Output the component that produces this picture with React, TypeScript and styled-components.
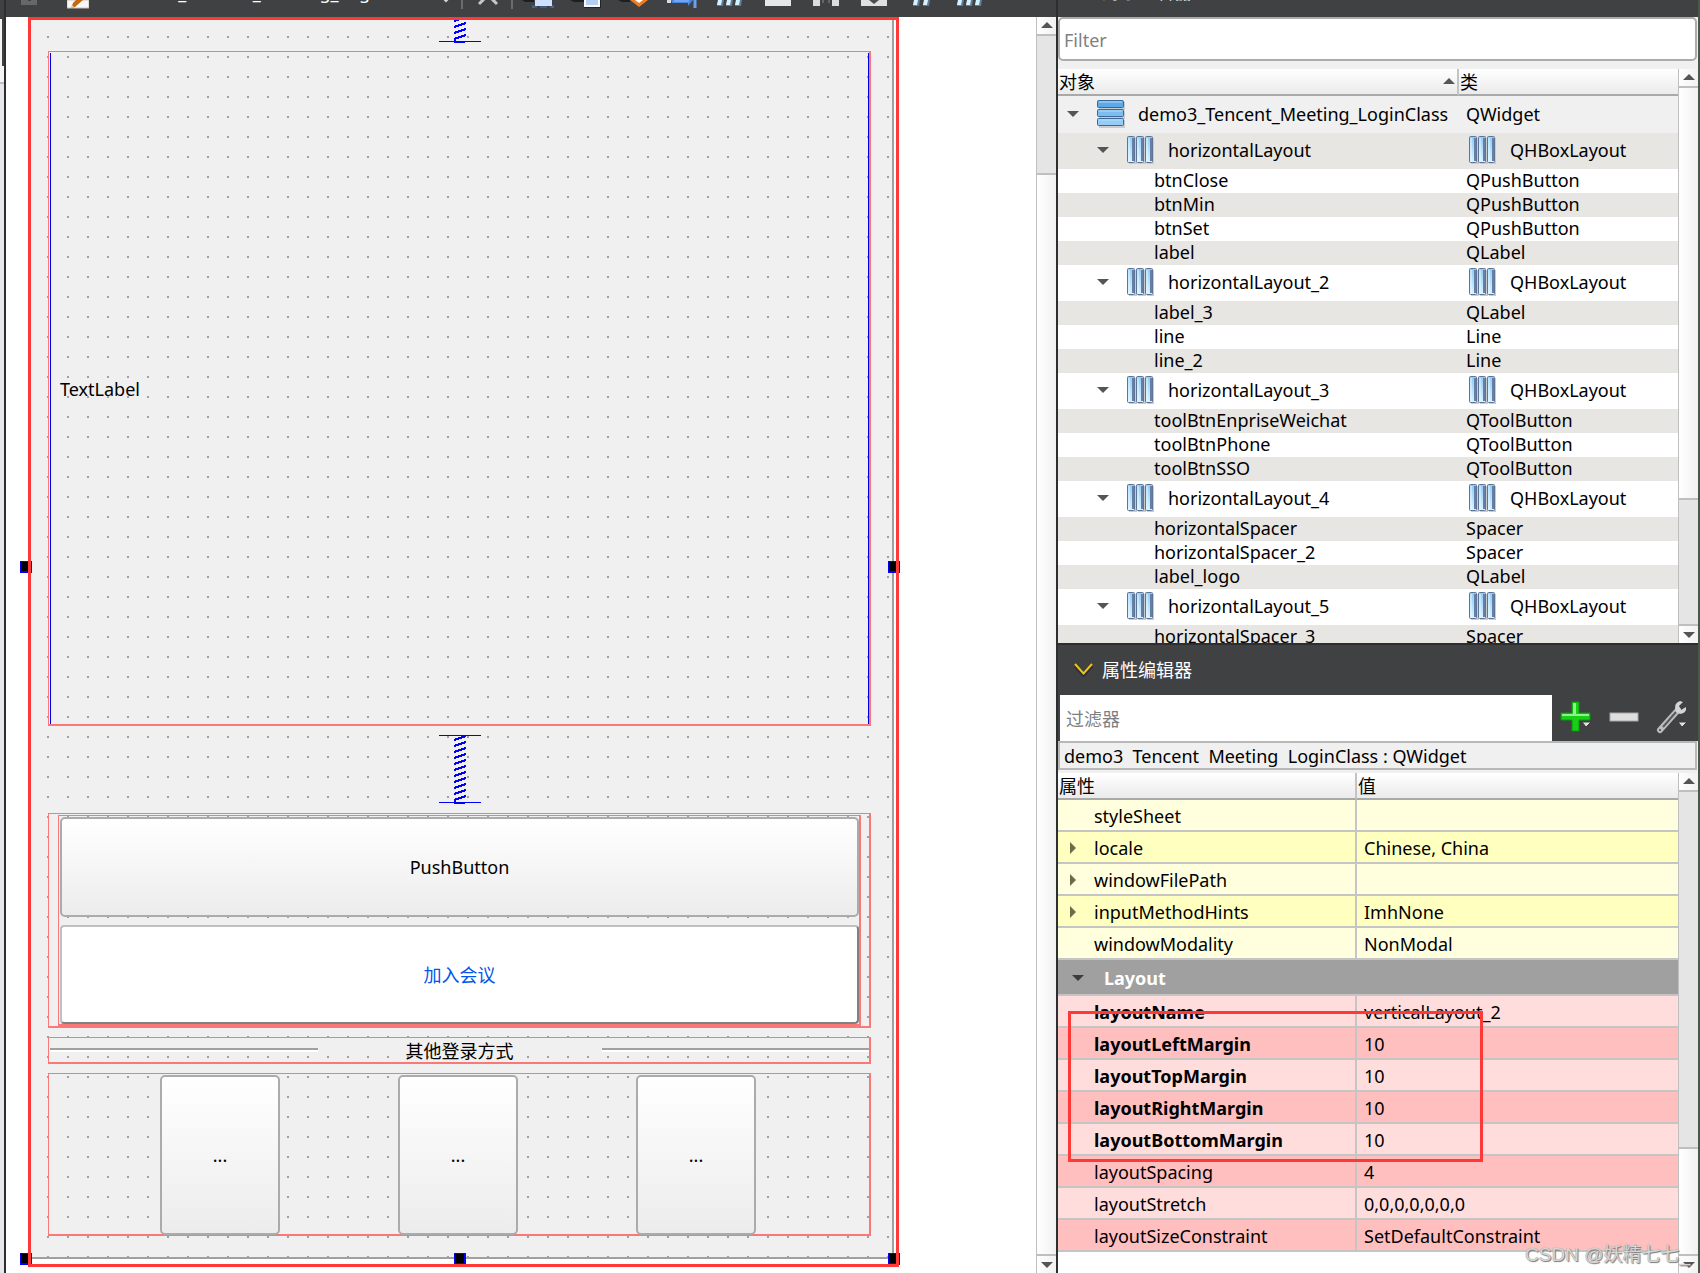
import React from "react";
import styled, { createGlobalStyle, css } from "styled-components";

const RED = "#ff3838";
const OUTLINE = "#fa7878";
const DARK = "#404142";
const EDGE = "#2c2e30";

const GlobalStyle = createGlobalStyle`
  *, *::before, *::after { box-sizing: border-box; }
  body {
    margin: 0;
    background: #fff;
    color: #000;
    font: 18px/24px "Noto Sans", "Noto Sans CJK SC", sans-serif;
  }
  button, input, select { font: inherit; color: inherit; }
`;

/* ---------- shell ---------- */

const Shell = styled.div`
  display: grid;
  grid-template-columns: 6px minmax(0, 1fr) 644px;
  height: 100vh;
  overflow: hidden;
`;

const LeftEdge = styled.div`
  display: flex;
  flex-direction: column;
  background: #e5e7ea;
  border-right: 2px solid ${EDGE};
`;

const LeftEdgeTop = styled.div`
  height: 66px;
  border-top: 19px solid ${DARK};
  border-right: 2px solid ${DARK};
  background: #f4f4f4;
`;

const LeftEdgeMark = styled.div`
  height: 18px;
  border-bottom: 2px solid #bfbfbf;
  background: #f4f4f4;
`;

const Workspace = styled.main`
  display: flex;
  flex-direction: column;
  min-width: 0;
  min-height: 0;
`;

const Sidebar = styled.aside`
  display: flex;
  flex-direction: column;
  min-height: 0;
  background: #f0f0f0;
  border-left: 2px solid ${EDGE};
  border-right: 2px solid #4c574c;
`;

/* ---------- top tool bar ---------- */

const Toolbar = styled.div`
  display: flex;
  flex: none;
  height: 17px;
  overflow: hidden;
  background: ${DARK};
`;

const ToolButton = styled.button<{ $w: number }>`
  display: flex;
  justify-content: center;
  width: ${(p) => p.$w}px;
  height: 17px;
  flex: none;
  padding: 0;
  border: 0;
  background: none;
`;

const FileSelect = styled.select`
  align-self: flex-end;
  width: 326px;
  height: 24px;
  margin-bottom: 13px;
  padding: 0 0 0 14px;
  border: 0;
  appearance: none;
  background: none;
  color: #fff;
`;

const Separator = styled.span`
  width: 2px;
  height: 9px;
  margin-right: 1px;
  flex: none;
  background: #6b6c6d;
`;

/* ---------- form canvas ---------- */

const CanvasRow = styled.div`
  display: flex;
  flex: 1;
  min-height: 0;
`;

const Canvas = styled.div`
  display: flex;
  flex: 1;
  min-width: 0;
  padding: 0 137px 6px 22px;
  background: #fff;
`;

const Frame = styled.section`
  position: relative;
  display: flex;
  flex: 1;
  min-width: 0;
  padding: 3px 5px 8px 3px;
  &::after {
    content: "";
    position: absolute;
    inset: 0;
    border: 3px solid ${RED};
    pointer-events: none;
  }
`;

const Form = styled.div`
  display: flex;
  flex: 1;
  flex-direction: column;
  min-width: 0;
  padding: 0 21px 21px 17px;
  border: solid #a0a0a0;
  border-width: 0 2px 2px 0;
  background: conic-gradient(at 2px 2px, transparent 75%, #a0a0a0 0) 16px 16px / 20px 20px #f0f0f0;
`;

type HandlePlace = "left" | "right" | "bottomLeft" | "bottom" | "bottomRight";

const handlePlaces = {
  left: css`left: -8px; top: calc(50% - 81px);`,
  right: css`right: -1px; top: calc(50% - 81px);`,
  bottomLeft: css`left: -8px; bottom: 2px;`,
  bottom: css`left: calc(50% - 10px); bottom: 2px;`,
  bottomRight: css`right: -1px; bottom: 2px;`,
};

const Handle = styled.span<{ $place: HandlePlace }>`
  position: absolute;
  width: 12px;
  height: 12px;
  background: #000;
  border: 1px solid #00f;
  border-bottom-width: 2px;
  border-right-width: 2px;
  ${(p) => handlePlaces[p.$place]}
`;

const SpacerItem = styled.div<{ $h: number; $end?: boolean }>`
  display: flex;
  flex: none;
  height: ${(p) => p.$h}px;
  justify-content: center;
  align-items: ${(p) => (p.$end ? "flex-start" : "center")};
`;

const Outline = styled.div`
  border: solid ${OUTLINE};
  border-width: 1px 2px 2px 1px;
`;

const LabelBox = styled(Outline)`
  display: flex;
  flex: 1;
  padding: 1px 0 0 1px;
`;

const LabelInner = styled.div`
  display: flex;
  flex: 1;
  align-items: center;
  padding-left: 9px;
  border: solid #0000e6;
  border-width: 0 1px;
`;

const ButtonGroup = styled(Outline)`
  padding: 1px 8px 0 9px;
`;

const ButtonStack = styled(Outline)`
  display: flex;
  flex-direction: column;
  gap: 8px;
  padding: 1px 0 0 1px;
`;

const raised = css`
  border: 2px solid #ababab;
  border-radius: 5px;
  background: linear-gradient(#fff, #ececec);
`;

const PushButton = styled.button`
  ${raised}
  height: 100px;
`;

const JoinButton = styled.button`
  height: 99px;
  border: 2px solid;
  border-color: #c0c0c0 #808080 #808080 #c0c0c0;
  border-radius: 4px;
  background: #fff;
  color: #0055ea;
`;

const DividerRow = styled(Outline)`
  display: flex;
  align-items: center;
  height: 27px;
  margin: 9px 0;
  padding-left: 1px;
`;

const Rule = styled.span`
  flex: 1;
  height: 4px;
  border-top: 2px solid #a0a0a0;
  border-bottom: 2px solid #fff;
`;

const DividerText = styled.span`
  width: 284px;
  padding-top: 2px;
  text-align: center;
`;

const ToolRow = styled(Outline)`
  display: flex;
  justify-content: space-between;
  padding: 1px 113px 0 111px;
`;

const LoginTool = styled.button`
  ${raised}
  width: 120px;
  height: 160px;
  margin-bottom: -1px;
`;

/* ---------- scroll bars ---------- */

const Bar = styled.div`
  display: flex;
  flex: none;
  flex-direction: column;
  width: 20px;
  border-left: 1px solid #bfbfbf;
  background: linear-gradient(90deg, #fff, #f1f1f1);
`;

const BarEnd = styled.button`
  display: flex;
  flex: none;
  align-items: center;
  justify-content: center;
  height: 17px;
  padding: 0;
  border: 0;
  background: none;
`;

const BarPart = styled.div<{ $size: number; $thumb?: boolean }>`
  flex: ${(p) => p.$size} 0 0;
  border-top: 2px solid #bfbfbf;
  background: ${(p) => (p.$thumb ? "#e5e5e5" : "none")};
`;

const BarLine = styled.div`
  flex: none;
  height: 2px;
  background: #bfbfbf;
`;

/* ---------- side bar ---------- */

const TopTitle = styled.h2`
  display: flex;
  flex: none;
  align-items: flex-end;
  gap: 9px;
  height: 17px;
  margin: 0;
  padding: 0 0 13px 16px;
  overflow: hidden;
  background: ${DARK};
  color: #fff;
  font-size: 18px;
  font-weight: 400;
  svg { margin-bottom: 4px; }
`;

const PanelTitle = styled.h2`
  display: flex;
  flex: none;
  align-items: center;
  gap: 9px;
  height: 52px;
  margin: 0;
  padding-left: 16px;
  border-top: 2px solid ${EDGE};
  background: ${DARK};
  color: #fff;
  font-size: 18px;
  font-weight: 400;
`;

const ObjectFilter = styled.input`
  flex: none;
  height: 44px;
  margin: 0 1px 8px 0;
  padding: 2px 4px 0;
  border: 2px solid #ababab;
  border-radius: 5px;
  background: #fff;
  &::placeholder { color: #808080; opacity: 1; }
`;

const FilterRow = styled.div`
  display: flex;
  flex: none;
  height: 46px;
  padding: 0 2px;
  background: ${DARK};
`;

const PropertyFilter = styled.input`
  flex: 1;
  min-width: 0;
  padding: 2px 6px 0;
  border: 0;
  background: #fff;
  &::placeholder { color: #808080; opacity: 1; }
`;

const FilterButton = styled.button`
  display: flex;
  align-items: center;
  justify-content: center;
  width: 48px;
  padding: 0 0 2px;
  border: 0;
  background: none;
`;

const SelectedObject = styled.div`
  flex: none;
  height: 29px;
  margin: 0 1px 3px 0;
  padding: 1px 4px 0;
  border: 2px solid #b8b8b8;
  background: #f0f0f0;
  white-space: pre;
`;

const Pane = styled.div<{ $grow: number; $bg: string }>`
  position: relative;
  display: flex;
  flex: ${(p) => p.$grow} 0 0;
  min-height: 0;
  overflow: hidden;
  background: ${(p) => p.$bg};
`;

const TableArea = styled.div`
  flex: 1;
  min-width: 0;
  overflow: hidden;
`;

const Table = styled.table`
  width: 100%;
  table-layout: fixed;
  border-spacing: 0;
  white-space: nowrap;
`;

const Head = styled.th<{ $w?: number }>`
  height: 27px;
  width: ${(p) => (p.$w ? `${p.$w}px` : "auto")};
  padding: 1px 2px 0 1px;
  border-bottom: 2px solid #a9a9a9;
  border-right: ${(p) => (p.$w ? "2px solid #c4c4c4" : "0")};
  background: linear-gradient(#fff, #ebebeb);
  font-weight: 400;
  text-align: left;
`;

const HeadInner = styled.span`
  display: flex;
  align-items: center;
  justify-content: space-between;
`;

const Cell = styled.td<{ $h: number; $bg: string; $pad: number }>`
  height: ${(p) => p.$h}px;
  padding: 0 0 2px ${(p) => p.$pad}px;
  background: ${(p) => p.$bg};
  line-height: 22px;
`;

const CellInner = styled.span<{ $gap: number }>`
  display: flex;
  align-items: center;
  gap: ${(p) => p.$gap}px;
`;

const PropName = styled.td<{ $bg: string; $bold?: boolean }>`
  height: 32px;
  padding: 2px 0 0 10px;
  border: solid #c5c5c5;
  border-width: 0 2px 2px 0;
  background: ${(p) => p.$bg};
  font-weight: ${(p) => (p.$bold ? 700 : 400)};
`;

const PropValue = styled.td<{ $bg: string }>`
  padding: 2px 0 0 7px;
  border-bottom: 2px solid #c5c5c5;
  background: ${(p) => p.$bg};
`;

const Indent = styled.span`
  display: flex;
  width: 26px;
  height: 12px;
  flex: none;
`;

const GroupCell = styled.td`
  height: 36px;
  padding: 2px 0 0 14px;
  border-bottom: 2px solid #c5c5c5;
  background: #a0a0a0;
  color: #fff;
  font-weight: 700;
`;

const Highlight = styled.div`
  position: absolute;
  left: 10px;
  top: 238px;
  width: 415px;
  height: 151px;
  border: 3px solid ${RED};
  pointer-events: none;
`;

const Watermark = styled.span`
  position: absolute;
  right: 8px;
  bottom: 6px;
  color: #d8d4d4;
  font: 19px/24px "Liberation Sans", "Noto Sans CJK SC", sans-serif;
  text-shadow: 1px 1px 1px #777, 0 0 1px #888;
`;

/* ---------- drawings ---------- */

const Triangle = ({ dir, color = "#555" }: { dir: "up" | "down" | "right"; color?: string }) => {
  const d = { up: "M0 8L6 2L12 8Z", down: "M0 3H12L6 9Z", right: "M2 0L8 6L2 12Z" }[dir];
  return (
    <svg width="12" height="12" viewBox="0 0 12 12" aria-hidden="true">
      <path d={d} fill={color} />
    </svg>
  );
};

const HBoxIcon = () => (
  <svg width="27" height="28" viewBox="0 0 27 28" aria-hidden="true">
    <defs>
      <linearGradient id="slat" x1="0" y1="0" x2="0" y2="1">
        <stop offset="0" stopColor="#8ccdf8" />
        <stop offset="1" stopColor="#dcf3ff" />
      </linearGradient>
    </defs>
    {[0, 9, 18].map((x) => (
      <g key={x}>
        <rect x={x + 2} y="2" width="8" height="26" fill="#c9cbce" />
        <rect x={x + 0.5} y="0.5" width="7" height="26" rx="1" fill="url(#slat)" stroke="#5f7598" />
        <path d={`M${x + 6} 2V25`} stroke="#667fa6" strokeWidth="2" />
        <path d={`M${x + 2} 2V25`} stroke="#e8f7ff" strokeWidth="1" />
      </g>
    ))}
  </svg>
);

const WidgetIcon = () => (
  <svg width="28" height="28" viewBox="0 0 28 28" aria-hidden="true">
    {["#5aa9e8", "#7dbcee", "#94ccf6"].map((c, i) => (
      <g key={c}>
        <rect x="2" y={i * 9 + 2} width="26" height="8" fill="#c9cbce" />
        <rect x="0.5" y={i * 9 + 0.5} width="26" height="7" rx="1" fill={c} stroke="#3c6898" />
        <path d={`M2 ${i * 9 + 2}H25`} stroke="#b4dcf8" />
      </g>
    ))}
  </svg>
);

const Spring = ({ h, cap }: { h: number; cap?: boolean }) => {
  const coils: number[] = [];
  for (let y = h - 4; y > (cap ? 4 : -2); y -= 6) coils.push(y);
  return (
    <svg width="42" height={h} viewBox={`0 0 42 ${h}`} shapeRendering="crispEdges" aria-hidden="true">
      <g stroke="#00f" strokeWidth="2" fill="none">
        {coils.map((y) => (
          <path key={y} d={`M15 ${y}L27 ${y - 4}`} />
        ))}
        <path d={`M16 ${h - 5}V${h - 1}H26`} />
      </g>
      <path d={`M0 ${h - 1.5}H42${cap ? "M0 0.5H42" : ""}`} stroke="#00f" />
    </svg>
  );
};

const Chevron = () => (
  <svg width="19" height="14" viewBox="0 0 19 14" aria-hidden="true">
    <path d="M1 2L9.5 11.5L18 2" fill="none" stroke="#2d2e2f" strokeWidth="3" transform="translate(0 1)" />
    <path d="M1 1L9.5 10.5L18 1" fill="none" stroke="#efc31c" strokeWidth="2" />
  </svg>
);

const slats = (xs: number[]) =>
  xs.map((x) => (
    <g key={x}>
      <path d={`M${x + 1} 0H${x + 7}L${x + 6} 6H${x}Z`} fill="#5d7c9c" />
      <path d={`M${x + 1} 0H${x + 5}L${x + 4} 5H${x}Z`} fill="#d6f2ff" />
    </g>
  ));

const toolDrawings: { name: string; art: React.ReactNode }[] = [
  { name: "Edit widgets", art: <><path d="M0 0H12V2H3Z" fill="#1d1e1f" /><rect x="13" width="17" height="6" fill="#cfe0ff" /><path d="M11 7H15M18 7H25M28 7H32M11 5V8M31 5V8" stroke="#4677bd" /></> },
  { name: "Edit signals", art: <><path d="M0 0H14V2H4Z" fill="#1d1e1f" /><rect x="14" width="17" height="8" fill="#1d2430" /><rect x="14" width="16" height="7" fill="#f5f9ff" /><rect x="16" width="12" height="5" fill="#b6cdf2" /></> },
  { name: "Edit buddies", art: <><path d="M0 0H12V2H4Z" fill="#1d1e1f" /><path d="M12 0H30L21 7Z" fill="#ef7c20" /><path d="M17 0H25L21 3Z" fill="#fff" /></> },
  { name: "Edit tab order", art: <><path d="M1 0H5V3H1Z" fill="#d8dce2" /><path d="M5 0H27L22 6V3H6Z" fill="#4a86e0" /><path d="M8 1H23" stroke="#9cc6ff" /><path d="M29 0V8" stroke="#6aa0e8" strokeWidth="3" /></> },
  { name: "Lay out horizontally", art: slats([3, 12, 21]) },
  { name: "Lay out vertically", art: <rect x="3" width="26" height="6" fill="#e6e6e6" /> },
  { name: "Split horizontally", art: <><path d="M3 0H10V6H3ZM22 0H29V6H22Z" fill="#dcdcdc" /><path d="M13 0V3M19 0V3" stroke="#8a8a8a" /></> },
  { name: "Split vertically", art: <><rect x="3" width="26" height="6" fill="#e0e0e0" /><path d="M11 0H21L16 4Z" fill="#4d4d4d" /></> },
  { name: "Lay out in a grid", art: slats([7, 17]) },
  { name: "Lay out in a form", art: slats([3, 12, 21]) },
];

/* ---------- data ---------- */

const treeRows: [string, string][] = [
  ["horizontalLayout", "QHBoxLayout"],
  ["btnClose", "QPushButton"],
  ["btnMin", "QPushButton"],
  ["btnSet", "QPushButton"],
  ["label", "QLabel"],
  ["horizontalLayout_2", "QHBoxLayout"],
  ["label_3", "QLabel"],
  ["line", "Line"],
  ["line_2", "Line"],
  ["horizontalLayout_3", "QHBoxLayout"],
  ["toolBtnEnpriseWeichat", "QToolButton"],
  ["toolBtnPhone", "QToolButton"],
  ["toolBtnSSO", "QToolButton"],
  ["horizontalLayout_4", "QHBoxLayout"],
  ["horizontalSpacer", "Spacer"],
  ["horizontalSpacer_2", "Spacer"],
  ["label_logo", "QLabel"],
  ["horizontalLayout_5", "QHBoxLayout"],
  ["horizontalSpacer_3", "Spacer"],
];

type Prop = { name: string; value: string; open?: boolean; bold?: boolean };

const widgetProps: Prop[] = [
  { name: "styleSheet", value: "" },
  { name: "locale", value: "Chinese, China", open: true },
  { name: "windowFilePath", value: "", open: true },
  { name: "inputMethodHints", value: "ImhNone", open: true },
  { name: "windowModality", value: "NonModal" },
];

const layoutProps: Prop[] = [
  { name: "layoutName", value: "verticalLayout_2", bold: true },
  { name: "layoutLeftMargin", value: "10", bold: true },
  { name: "layoutTopMargin", value: "10", bold: true },
  { name: "layoutRightMargin", value: "10", bold: true },
  { name: "layoutBottomMargin", value: "10", bold: true },
  { name: "layoutSpacing", value: "4" },
  { name: "layoutStretch", value: "0,0,0,0,0,0,0" },
  { name: "layoutSizeConstraint", value: "SetDefaultConstraint" },
];

/* ---------- parts ---------- */

const ScrollBar = ({ before, thumb, after }: { before: number; thumb: number; after: number }) => (
  <Bar>
    <BarEnd aria-label="Scroll up"><Triangle dir="up" /></BarEnd>
    {before > 0 && <BarPart $size={before} />}
    <BarPart $size={thumb} $thumb />
    {after > 0 && <BarPart $size={after} />}
    <BarLine />
    <BarEnd aria-label="Scroll down"><Triangle dir="down" /></BarEnd>
  </Bar>
);

const PropRows = ({ rows, tones }: { rows: Prop[]; tones: [string, string] }) => (
  <>
    {rows.map((r, i) => (
      <tr key={r.name}>
        <PropName $bg={tones[i % 2]} $bold={r.bold}>
          <CellInner $gap={0}>
            <Indent>{r.open && <Triangle dir="right" color="#6b6b4a" />}</Indent>
            {r.name}
          </CellInner>
        </PropName>
        <PropValue $bg={tones[i % 2]}>{r.value}</PropValue>
      </tr>
    ))}
  </>
);

const ObjectTree = () => (
  <Table>
    <thead>
      <tr>
        <Head $w={401}><HeadInner>对象<Triangle dir="up" /></HeadInner></Head>
        <Head>类</Head>
      </tr>
    </thead>
    <tbody>
      <tr>
        <Cell $h={37} $bg="#f0f0f0" $pad={9}>
          <CellInner $gap={13}>
            <CellInner $gap={18}><Triangle dir="down" /><WidgetIcon /></CellInner>
            demo3_Tencent_Meeting_LoginClass
          </CellInner>
        </Cell>
        <Cell $h={37} $bg="#f0f0f0" $pad={7}>QWidget</Cell>
      </tr>
      {treeRows.map(([name, cls], i) => {
        const bg = i % 2 ? "#fff" : "#e8e6e2";
        const isLayout = cls === "QHBoxLayout";
        return isLayout ? (
          <tr key={name}>
            <Cell $h={36} $bg={bg} $pad={39}>
              <CellInner $gap={14}>
                <CellInner $gap={18}><Triangle dir="down" /><HBoxIcon /></CellInner>
                {name}
              </CellInner>
            </Cell>
            <Cell $h={36} $bg={bg} $pad={10}>
              <CellInner $gap={14}><HBoxIcon />{cls}</CellInner>
            </Cell>
          </tr>
        ) : (
          <tr key={name}>
            <Cell $h={24} $bg={bg} $pad={96}>{name}</Cell>
            <Cell $h={24} $bg={bg} $pad={7}>{cls}</Cell>
          </tr>
        );
      })}
    </tbody>
  </Table>
);

const PropertyTable = () => (
  <Table>
    <thead>
      <tr>
        <Head $w={299}>属性</Head>
        <Head>值</Head>
      </tr>
    </thead>
    <tbody>
      <PropRows rows={widgetProps} tones={["#ffffdd", "#ffffbf"]} />
      <tr>
        <GroupCell colSpan={2}>
          <CellInner $gap={20}><Triangle dir="down" color="#3c3c3c" />Layout</CellInner>
        </GroupCell>
      </tr>
      <PropRows rows={layoutProps} tones={["#ffdddd", "#ffbfbf"]} />
    </tbody>
  </Table>
);

const TopToolbar = () => (
  <Toolbar>
    <ToolButton $w={45} aria-label="Save">
      <svg width="16" height="17"><rect width="16" height="5" fill="#666768" /><rect x="7" width="3" height="1" fill="#404142" /></svg>
    </ToolButton>
    <ToolButton $w={54} aria-label="Edit">
      <svg width="22" height="17"><rect width="22" height="8" fill="#faf8f6" stroke="#c9c2ba" /><path d="M9 0H16L8 7L4 8L6 3Z" fill="#c8690e" /><path d="M4 8L5 5L7 7Z" fill="#eed2b0" /></svg>
    </ToolButton>
    <FileSelect aria-label="File"><option>demo3_Tencent_Meeting_Login.ui</option></FileSelect>
    <ToolButton $w={30} aria-label="Open file list">
      <svg width="12" height="17"><path d="M1 -4L6 1L11 -4" stroke="#d6d6d6" strokeWidth="2" fill="none" /></svg>
    </ToolButton>
    <Separator />
    <ToolButton $w={47} aria-label="Close file">
      <svg width="20" height="17"><path d="M1 4L10 -5L19 4" stroke="#c8c8c8" strokeWidth="3" fill="none" /></svg>
    </ToolButton>
    <Separator />
    {toolDrawings.map((t) => (
      <ToolButton key={t.name} $w={48} aria-label={t.name}>
        <svg width="32" height="17" viewBox="0 0 32 17">{t.art}</svg>
      </ToolButton>
    ))}
  </Toolbar>
);

const DesignedForm = () => (
  <Frame>
    <Handle $place="left" />
    <Handle $place="right" />
    <Handle $place="bottomLeft" />
    <Handle $place="bottom" />
    <Handle $place="bottomRight" />
    <Form>
      <SpacerItem $h={31} $end><Spring h={23} /></SpacerItem>
      <LabelBox><LabelInner>TextLabel</LabelInner></LabelBox>
      <SpacerItem $h={87}><Spring h={69} cap /></SpacerItem>
      <ButtonGroup>
        <ButtonStack>
          <PushButton>PushButton</PushButton>
          <JoinButton>加入会议</JoinButton>
        </ButtonStack>
      </ButtonGroup>
      <DividerRow>
        <Rule />
        <DividerText>其他登录方式</DividerText>
        <Rule />
      </DividerRow>
      <ToolRow>
        <LoginTool>...</LoginTool>
        <LoginTool>...</LoginTool>
        <LoginTool>...</LoginTool>
      </ToolRow>
    </Form>
  </Frame>
);

export default function App() {
  return (
    <>
      <GlobalStyle />
      <Shell>
        <LeftEdge>
          <LeftEdgeTop />
          <LeftEdgeMark />
        </LeftEdge>
        <Workspace>
          <TopToolbar />
          <CanvasRow>
            <Canvas><DesignedForm /></Canvas>
            <ScrollBar before={0} thumb={138} after={1084} />
          </CanvasRow>
        </Workspace>
        <Sidebar>
          <TopTitle><Chevron />对象查看器</TopTitle>
          <ObjectFilter aria-label="Filter objects" placeholder="Filter" />
          <Pane $grow={574} $bg="#fff">
            <TableArea><ObjectTree /></TableArea>
            <ScrollBar before={412} thumb={124} after={0} />
          </Pane>
          <PanelTitle><Chevron />属性编辑器</PanelTitle>
          <FilterRow>
            <PropertyFilter aria-label="过滤属性" placeholder="过滤器" />
            <FilterButton aria-label="Add property">
              <svg width="32" height="32" viewBox="0 0 32 32">
                <path d="M12 1H19V12H30V19H19V30H12V19H1V12H12Z" fill="#17cf17" stroke="#0a9a0a" />
                <path d="M13 2H16V13H29V15H2V13H13Z" fill="#8df28d" />
                <path d="M22 21H31L26 26Z" fill="#e2e2e2" stroke="#3c3c3c" />
              </svg>
            </FilterButton>
            <FilterButton aria-label="Remove property">
              <svg width="32" height="32" viewBox="0 0 32 32">
                <rect x="2" y="12" width="28" height="8" fill="#dedede" stroke="#a8a8a8" />
              </svg>
            </FilterButton>
            <FilterButton aria-label="Configure">
              <svg width="32" height="34" viewBox="0 0 32 34">
                <path d="M4 30L22 10" stroke="#bdbdbd" strokeWidth="6" strokeLinecap="round" />
                <path d="M7 27L20 12" stroke="#5a5a5a" strokeWidth="2" />
                <path d="M20 12Q17 3 24 1L27 2L23 6L25 10L30 7Q31 13 24 14Z" fill="#d4d4d4" />
                <circle cx="4" cy="30" r="1" fill="#404142" />
                <path d="M22 22H31L26 27Z" fill="#e2e2e2" stroke="#3c3c3c" />
              </svg>
            </FilterButton>
          </FilterRow>
          <SelectedObject>demo3  Tencent  Meeting  LoginClass : QWidget</SelectedObject>
          <Pane $grow={500} $bg="#fff">
            <TableArea><PropertyTable /></TableArea>
            <ScrollBar before={0} thumb={360} after={107} />
            <Highlight />
            <Watermark>CSDN @妖精七七_</Watermark>
          </Pane>
        </Sidebar>
      </Shell>
    </>
  );
}
